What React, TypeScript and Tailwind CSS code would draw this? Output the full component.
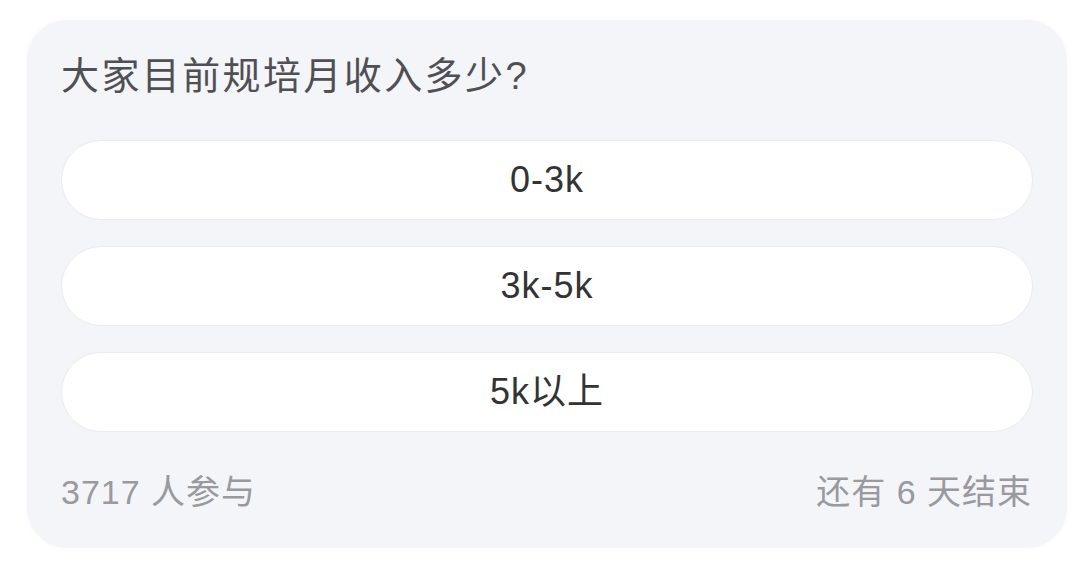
export default function App() {
  const options = ["0-3k", "3k-5k", "5k以上"];
  return (
    <div
      className="w-[1080px] h-[572px] bg-white pt-[20px] pl-[27px]"
      style={{ fontFamily: '"Liberation Sans", "Noto Sans CJK SC", sans-serif' }}
    >
      <div className="w-[1040px] h-[528px] rounded-[40px] bg-[#f4f5f9] shadow-[0_0_6px_rgba(0,0,0,0.03)] px-[34px] pt-[32px] flex flex-col">
        <div className="text-[38px] leading-[48px] text-[#505054] tracking-[2.4px]">
          大家目前规培月收入多少?
        </div>
        <div className="mt-[40px] flex flex-col gap-[26px]">
          {options.map((o) => (
            <div
              key={o}
              className="h-[80px] rounded-full bg-white border border-[#ebebef] flex items-center justify-center text-[36px] tracking-[1px] text-[#333336]"
            >
              {o}
            </div>
          ))}
        </div>
        <div className="mt-[40px] flex justify-between items-center text-[34px] leading-[40px] text-[#99999e] tracking-[1px]">
          <span>3717 人参与</span>
          <span className="mr-[1px]">还有 6 天结束</span>
        </div>
      </div>
    </div>
  );
}
